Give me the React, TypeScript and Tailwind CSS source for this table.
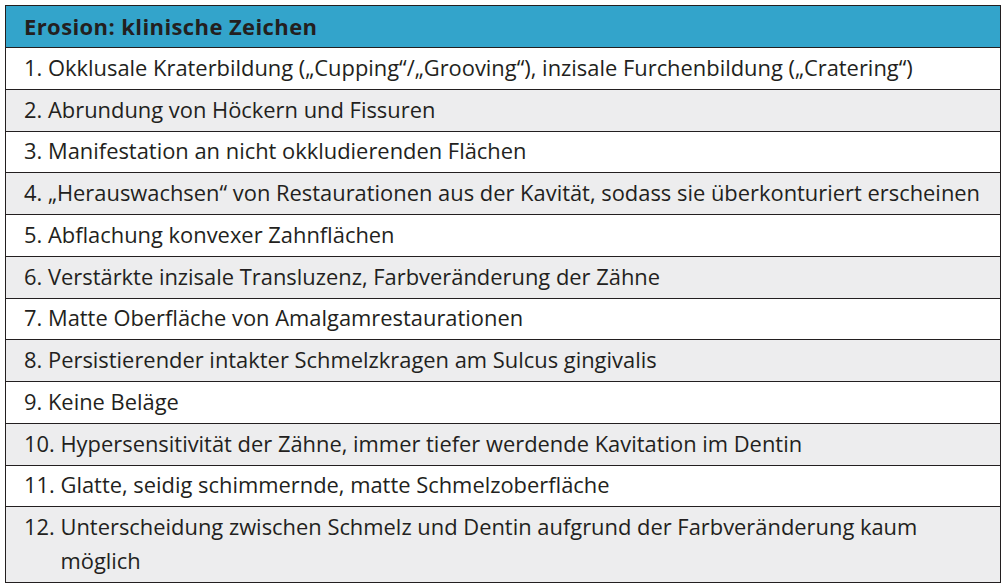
const ROWS = [
  'Okklusale Kraterbildung (\u201eCupping\u201c/\u201eGrooving\u201c), inzisale Furchenbildung (\u201eCratering\u201c)',
  'Abrundung von Höckern und Fissuren',
  'Manifestation an nicht okkludierenden Flächen',
  '\u201eHerauswachsen\u201c von Restaurationen aus der Kavität, sodass sie überkonturiert erscheinen',
  'Abflachung konvexer Zahnflächen',
  'Verstärkte inzisale Transluzenz, Farbveränderung der Zähne',
  'Matte Oberfläche von Amalgamrestaurationen',
  'Persistierender intakter Schmelzkragen am Sulcus gingivalis',
  'Keine Beläge',
  'Hypersensitivität der Zähne, immer tiefer werdende Kavitation im Dentin',
  'Glatte, seidig schimmernde, matte Schmelzoberfläche',
  'Unterscheidung zwischen Schmelz und Dentin aufgrund der Farbveränderung kaum möglich',
]

export default function App() {
  return (
    <div className="w-[1007px] h-[588px] bg-white pt-[5px] pl-[5px] font-['Open_Sans',sans-serif] text-[#231f20]">
      <div className="w-[996px] border border-[#231f20]">
        <div className="h-[42px] flex items-center px-[18px] bg-[#33a4cb] border-b border-[#231f20] text-[22px] tracking-[0.4px] font-bold">
          Erosion: klinische Zeichen
        </div>
        {ROWS.map((text, i) => {
          const last = i === ROWS.length - 1
          return (
            <div
              key={i}
              className={`flex px-[18px] text-[21.9px] ${i % 2 === 1 ? 'bg-[#ededee]' : 'bg-white'} ${
                last ? 'pt-[3px] pb-[4px] leading-[34px]' : 'h-[41.75px] items-center border-b border-[#231f20]'
              }`}
            >
              <span className="whitespace-pre">{`${i + 1}. `}</span>
              <span>{text}</span>
            </div>
          )
        })}
      </div>
    </div>
  )
}
